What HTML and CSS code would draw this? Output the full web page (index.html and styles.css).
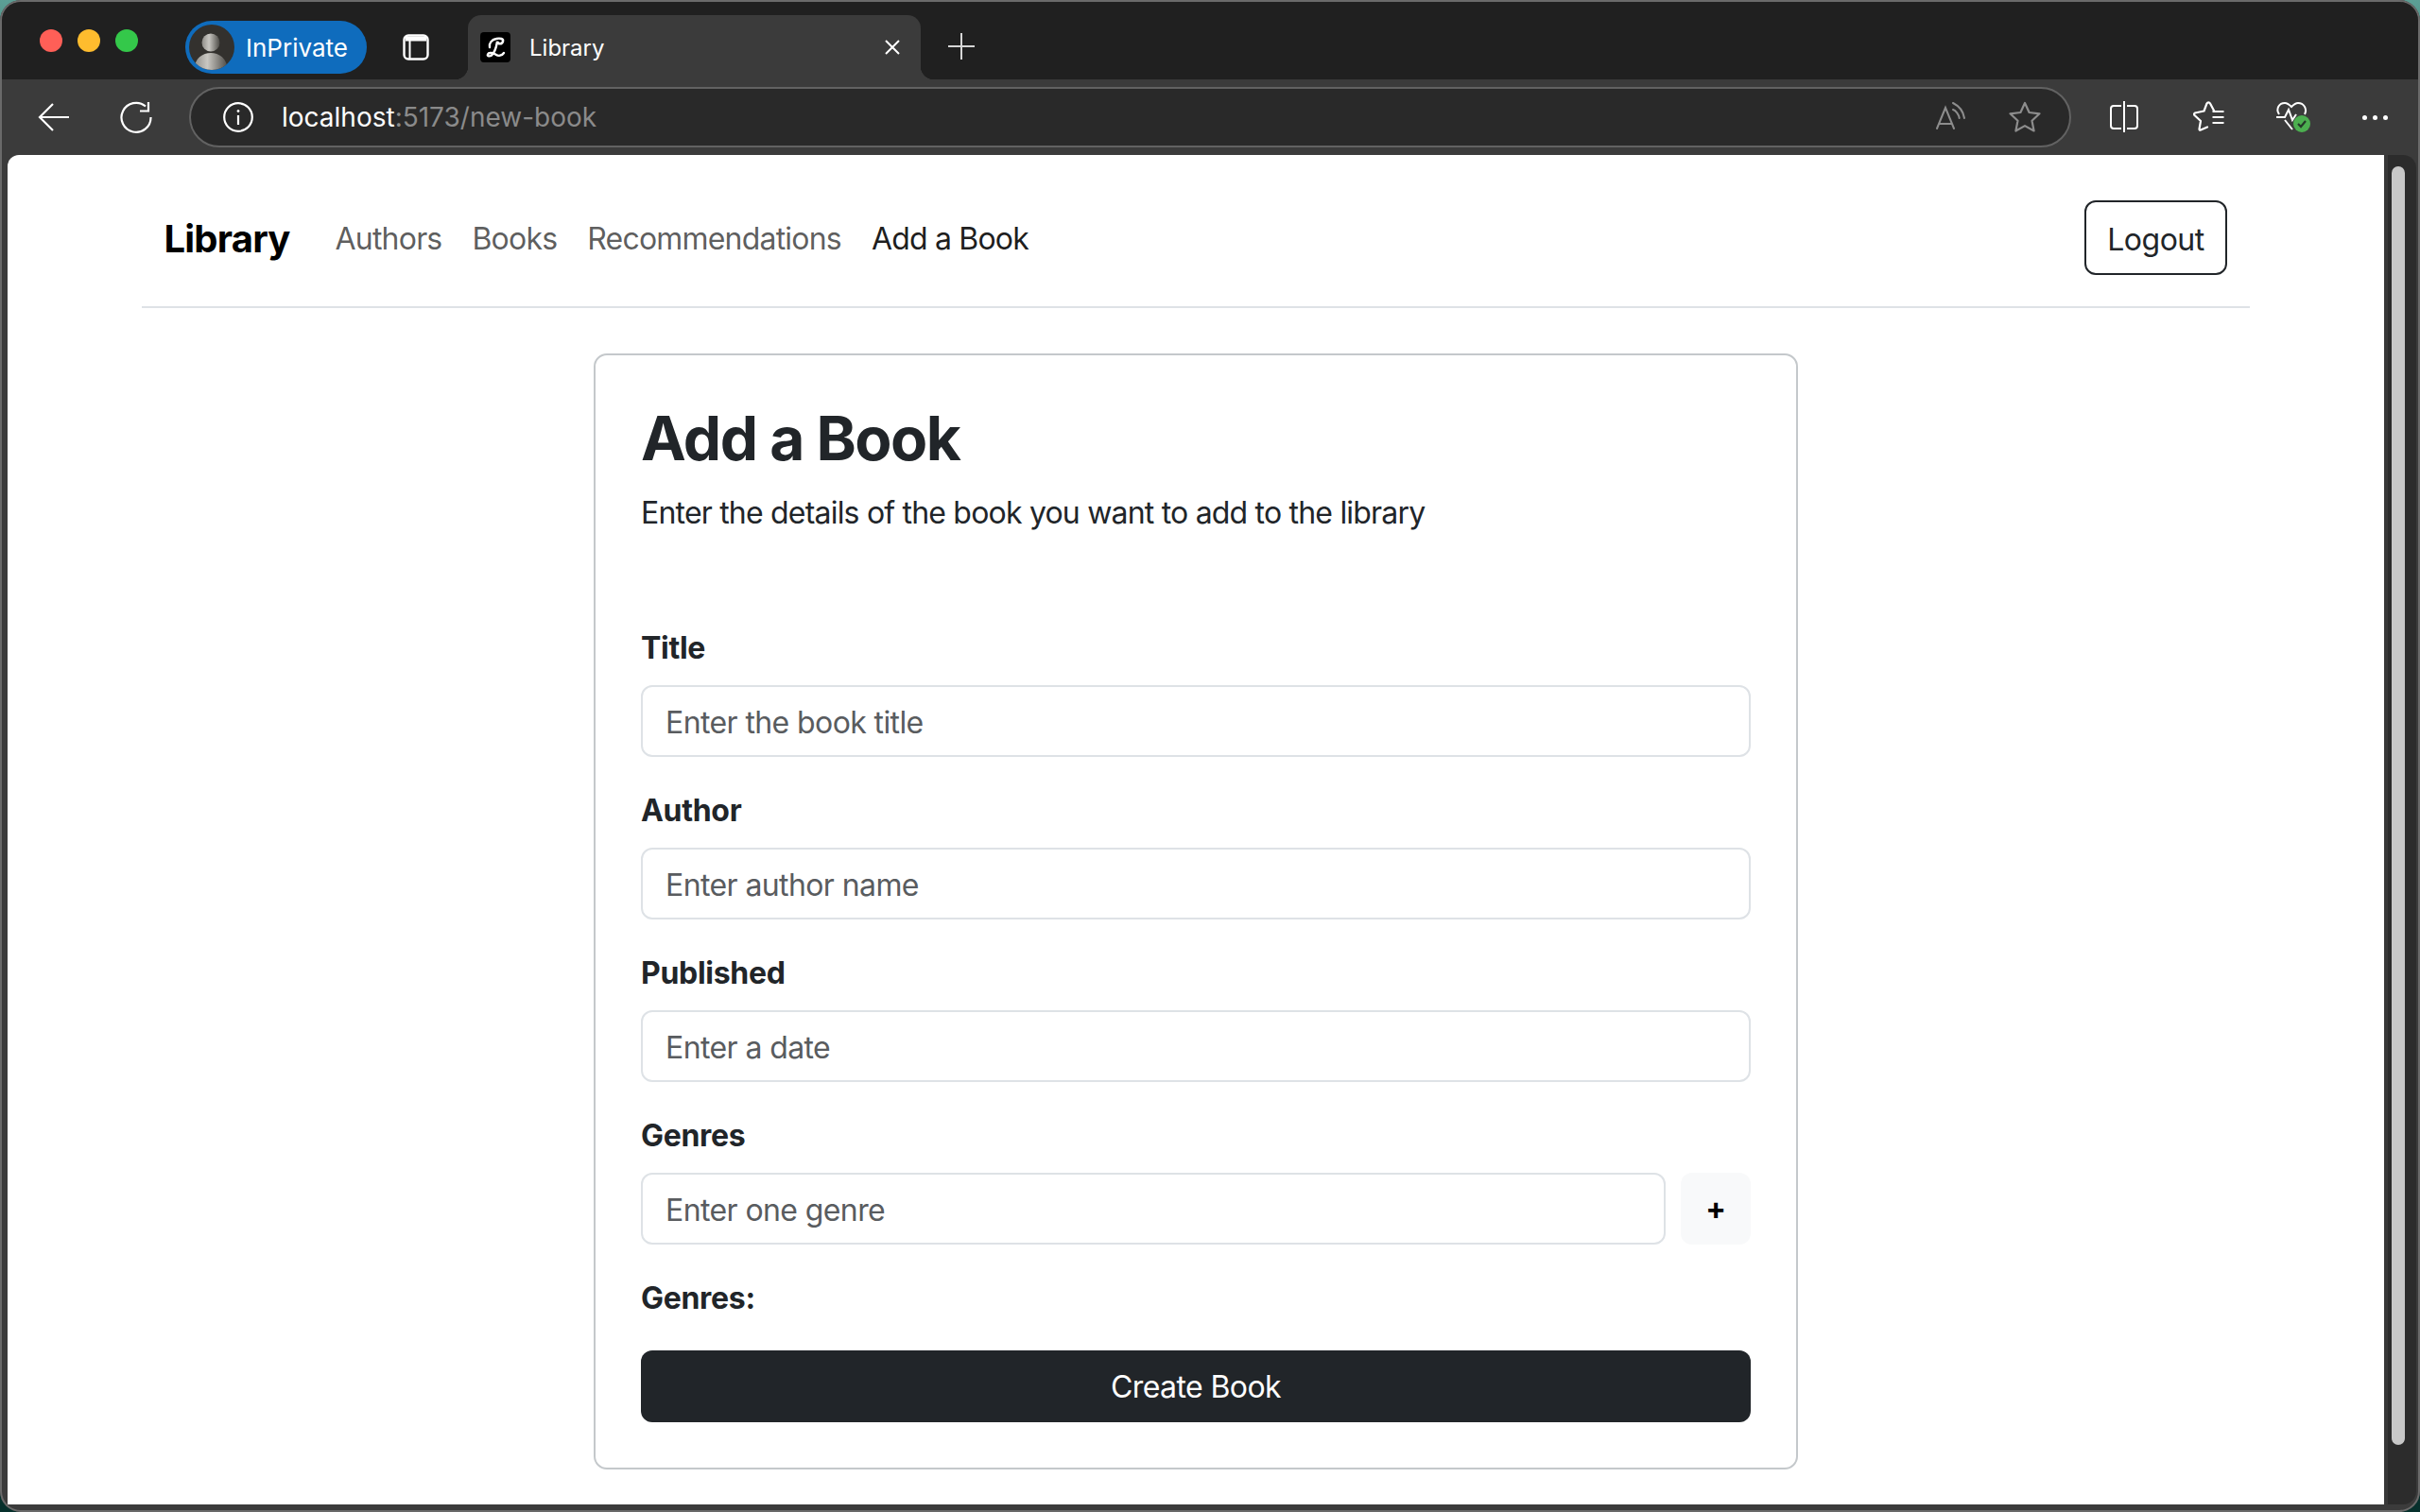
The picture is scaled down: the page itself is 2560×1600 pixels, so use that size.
FILE: index.html
```html
<!DOCTYPE html>
<html lang="en">
<head>
    <meta charset="UTF-8">
    <meta name="viewport" content="width=device-width, initial-scale=1.0">
    <title>Library</title>
    <link rel="stylesheet" href="styles.css">
</head>
<body>
<div class="window">

    <!-- tabs -->
    <div class="tabstrip">
        <div class="lights">
            <span class="light red"></span>
            <span class="light yellow"></span>
            <span class="light green"></span>
        </div>
        <div class="profile">
            <span class="avatar">
                <svg width="48" height="48" viewBox="0 0 48 48">
                    <defs>
                        <linearGradient id="bust" x1="0" x2="1" y1="0" y2="0">
                            <stop offset="0" stop-color="#8e8c87"/>
                            <stop offset="0.4" stop-color="#c9c7c2"/>
                            <stop offset="1" stop-color="#4c4a46"/>
                        </linearGradient>
                        <clipPath id="round"><circle cx="24" cy="24" r="24"/></clipPath>
                    </defs>
                    <circle cx="24" cy="24" r="24" fill="#33312e"/>
                    <circle cx="23" cy="19" r="9.500" fill="url(#bust)"/>
                    <path d="M5 50c0-14 9-20 18-20s18 6 18 20z" fill="url(#bust)" clip-path="url(#round)"/>
                </svg>
            </span>
            <span class="profile-name">InPrivate</span>
        </div>
        <svg class="tab-actions" width="28" height="28" viewBox="0 0 28 28" fill="none" stroke="#fff" stroke-width="2.4">
            <rect x="1.5" y="1.5" width="25" height="25" rx="4.500"/>
            <path d="M3 2.500h22v5H3z" fill="#fff" stroke="none"/>
            <path d="M7.500 7v19" stroke-width="2"/>
        </svg>
        <div class="tab">
            <svg class="favicon" width="32" height="32" viewBox="0 0 32 32" fill="none" stroke="#fff" stroke-width="2.400" stroke-linecap="round">
                <path d="M10 16C9 12 12 8 17 7c4-1 8 0 7 3-1 3-5 3-6 0-1 6-3 12-6 14.500-2 1.500-5 1-4-1 1-2.500 6-1.500 9 .5 2 1.500 6 1 8-2"/>
            </svg>
            <span class="tab-title">Library</span>
            <svg class="tab-close" width="16" height="16" viewBox="0 0 16 16" stroke="#fff" stroke-width="2">
                <path d="M1 1l14 14M15 1L1 15"/>
            </svg>
        </div>
        <svg class="new-tab" width="28" height="28" viewBox="0 0 28 28" stroke="#d6d6d6" stroke-width="2">
            <path d="M14 0v28M0 14h28"/>
        </svg>
    </div>

    <!-- toolbar -->
    <div class="toolbar">
        <svg class="tool-back" width="33" height="30" viewBox="0 0 33 30" fill="none" stroke="#fff" stroke-width="2.2">
            <path d="M33 15H2M16 1L2 15l14 14"/>
        </svg>
        <svg class="tool-reload" width="34" height="34" viewBox="0 0 34 34" fill="none" stroke="#fff" stroke-width="2.2">
            <path d="M27 5.500A15.500 15.500 0 1 0 32.500 17"/>
            <path d="M30 1v9.500h-9"/>
        </svg>
        <div class="address">
            <svg width="32" height="32" viewBox="0 0 32 32" fill="none" stroke="#fff" stroke-width="2.2">
                <circle cx="16" cy="16" r="14.8"/>
                <path d="M16 14v10"/>
                <circle cx="16" cy="9.500" r="1" fill="#fff" stroke-width="1"/>
            </svg>
            <span class="url"><span class="url-host">localhost</span>:5173/new-book</span>
            <svg class="addr-read" width="32" height="32" viewBox="0 0 32 32" fill="none" stroke="#8d8d8d" stroke-width="2" stroke-linecap="round">
                <path d="M1 28L10 6l9 22M3.500 23h13"/>
                <path d="M18 1c6 3 11 9 12 16M18 8c3 1 6 5 6.700 9"/>
            </svg>
            <svg class="addr-star" width="34" height="34" viewBox="0 0 34 34" fill="none" stroke="#8d8d8d" stroke-width="2.2" stroke-linejoin="round">
                <path d="M17 2l4.600 10 10.900 1.300-8 7.400 2.100 10.800L17 26.100 7.400 31.500l2.100-10.800-8-7.400L12.400 12z"/>
            </svg>
        </div>
        <svg class="tool-split" width="32" height="34" viewBox="0 0 32 34" fill="none" stroke="#fff" stroke-width="2">
            <path d="M13 5H5a3 3 0 0 0-3 3v18a3 3 0 0 0 3 3h8M19 5h8a3 3 0 0 1 3 3v18a3 3 0 0 1-3 3h-8"/>
            <path d="M16 0v33"/>
        </svg>
        <svg class="tool-favs" width="34" height="34" viewBox="0 0 34 34" fill="none" stroke="#fff" stroke-width="2.2" stroke-linejoin="round" stroke-linecap="round">
            <path d="M22 10L18 2.500a2 2 0 0 0-3.500 0L11.500 10.500 2 12.500a1.500 1.500 0 0 0-.5 2.500L8 21 6.500 29.500c0 1 .5 1.500 1.500 1L15 27.500"/>
            <path d="M20.500 11h12M20.500 17h12M20.500 23h12" stroke-width="2" stroke-linecap="butt"/>
        </svg>
        <svg class="tool-health" width="40" height="34" viewBox="0 0 40 34" fill="none" stroke="#fff" stroke-width="2">
            <path d="M5 14C1 8 5 2 11 2c3 0 5 2 7 4 2-2 4-4 7-4 6 0 10 6 7 12"/>
            <path d="M2 17h9l4-8 4 11 4-6"/>
            <path d="M11 20l8 10"/>
            <circle cx="29" cy="24" r="9" fill="#4caf50" stroke="none"/>
            <path d="M25 24l3 3 5-6" stroke="#25382a" stroke-width="2.200"/>
        </svg>
        <span class="tool-more"><i></i><i></i><i></i></span>
    </div>

    <div class="viewport">
        <div class="page">
            <nav class="navbar">
                <a class="brand">Library</a>
                <ul class="nav-links">
                    <li><a class="nav-link">Authors</a></li>
                    <li><a class="nav-link">Books</a></li>
                    <li><a class="nav-link">Recommendations</a></li>
                    <li><a class="nav-link active">Add a Book</a></li>
                </ul>
                <button class="btn-logout">Logout</button>
            </nav>

            <div class="card">
                <h2>Add a Book</h2>
                <p class="lead">Enter the details of the book you want to add to the library</p>

                <form>
                    <div class="field">
                        <label for="title">Title</label>
                        <input id="title" type="text" placeholder="Enter the book title">
                    </div>
                    <div class="field">
                        <label for="author">Author</label>
                        <input id="author" type="text" placeholder="Enter author name">
                    </div>
                    <div class="field">
                        <label for="published">Published</label>
                        <input id="published" type="text" placeholder="Enter a date">
                    </div>
                    <div class="field">
                        <label for="genre">Genres</label>
                        <div class="genre-row">
                            <input id="genre" type="text" placeholder="Enter one genre">
                            <button type="button" class="btn-add">+</button>
                        </div>
                    </div>
                    <div class="field">
                        <label class="genres-label">Genres:</label>
                    </div>
                    <button type="submit" class="btn-create">Create Book</button>
                </form>
            </div>
        </div>
        <div class="scrollbar"><div class="thumb"></div></div>
    </div>
</div>
</body>
</html>
```

FILE: styles.css
```css
* {
    box-sizing: border-box;
}
html, body {
    margin: 0;
    height: 100%;
    overflow: hidden;
}
body {
    background: linear-gradient(#5c9f95 0, #4d8f88 40px, #06302c 1500px);
    font-family: Inter, "Liberation Sans", sans-serif;
    color: #212529;
}

/* Окно браузера */
.window {
    display: flex;
    flex-direction: column;
    height: 1600px;
    background-color: #3b3b3b;
    border-radius: 22px;
    box-shadow: inset 0 0 0 2px #6a6a6a;
    overflow: hidden;
}

/* Вкладки */
.tabstrip {
    display: flex;
    align-items: flex-start;
    flex: 0 0 82px;
    margin: 2px 2px 0;
    background-color: #202020;
    border-radius: 20px 20px 0 0;
}
.lights {
    display: flex;
    gap: 16px;
    margin: 29px 0 0 40px;
}
.light {
    width: 24px;
    height: 24px;
    border-radius: 50%;
}
.red { background-color: #ff5f57; }
.yellow { background-color: #febc2e; }
.green { background-color: #34c84a; }
.profile {
    display: flex;
    align-items: center;
    gap: 12px;
    width: 192px;
    height: 56px;
    margin: 20px 0 0 50px;
    padding-left: 4px;
    background-color: #0f6cbd;
    border-radius: 28px;
}
.avatar {
    display: flex;
    flex: none;
}
.profile-name {
    color: #fff;
    font-size: 26px;
}
.tab-actions {
    margin: 34px 0 0 38px;
}
.tab {
    position: relative;
    display: flex;
    align-items: center;
    width: 479px;
    height: 68px;
    margin: 14px 0 0 41px;
    padding: 0 22px 0 13px;
    background-color: #3b3b3b;
    border-radius: 14px 14px 0 0;
}
.tab::before, .tab::after {
    content: "";
    position: absolute;
    bottom: 0;
    width: 14px;
    height: 14px;
}
.tab::before {
    left: -14px;
    background: radial-gradient(circle at 0 0, #202020 14px, #3b3b3b 14.5px);
}
.tab::after {
    right: -14px;
    background: radial-gradient(circle at 100% 0, #202020 14px, #3b3b3b 14.5px);
}
.favicon {
    flex: none;
    background-color: #000;
    border-radius: 4px;
}
.tab-title {
    flex: 1;
    margin-left: 20px;
    color: #fff;
    font-size: 24px;
}
.new-tab {
    margin: 33px 0 0 29px;
}

/* Панель адреса */
.toolbar {
    display: flex;
    align-items: center;
    flex: 0 0 80px;
    padding: 0 0 0 40px;
}
.tool-back {
    margin-right: 54px;
}
.tool-reload {
    margin-right: 39px;
}
.address {
    display: flex;
    align-items: center;
    flex: 0 0 1991px;
    height: 64px;
    padding: 0 30px 0 34px;
    background-color: #292929;
    border: 2px solid #626262;
    border-radius: 32px;
}
.url {
    flex: 1;
    margin-left: 30px;
    color: #8b8b8b;
    font-size: 28px;
}
.url-host {
    color: #fff;
}
.addr-read {
    margin-right: 45px;
}
.tool-split {
    margin-left: 40px;
}
.tool-favs {
    margin-left: 57px;
}
.tool-health {
    margin-left: 52px;
}
.tool-more {
    display: flex;
    gap: 6px;
    margin-left: 53px;
}
.tool-more i {
    width: 5px;
    height: 5px;
    background-color: #fff;
    border-radius: 50%;
}

/* Страница */
.viewport {
    display: flex;
    flex: 1;
    min-height: 0;
    margin: 0 4px 8px 8px;
}
.page {
    flex: 1;
    min-width: 0;
    padding: 0 142px;
    background-color: #fff;
    border-radius: 12px 0 0 0;
    overflow: hidden;
}
.scrollbar {
    flex: 0 0 34px;
    padding: 12px 0 0 4px;
    background-color: #2c2c2c;
    border-left: 4px solid #383838;
    border-radius: 0 14px 14px 0;
}
.thumb {
    width: 14px;
    height: 1353px;
    background-color: #c8c8c8;
    border-radius: 7px;
}

/* Навигация */
.navbar {
    display: flex;
    align-items: center;
    padding: 48px 24px 33px 23.5px;
    border-bottom: 2px solid #dee2e6;
}
.brand {
    margin: 2px 32px 0 0;
    color: #000;
    font-size: 40px;
    font-weight: 700;
    letter-spacing: -0.8px;
}
.nav-links {
    display: flex;
    flex: 1;
    margin: 2px 0 0;
    padding: 0;
    list-style: none;
}
.nav-link {
    display: block;
    padding: 16px;
    color: rgba(0, 0, 0, 0.65);
    font-size: 32px;
    letter-spacing: -0.8px;
}
.nav-link.active {
    color: rgba(0, 0, 0, 0.9);
}
.btn-logout {
    width: 151px;
    height: 79px;
    padding-top: 4px;
    background-color: #fff;
    border: 2px solid #212529;
    border-radius: 12px;
    color: #212529;
    font-family: inherit;
    font-size: 32px;
    letter-spacing: -0.5px;
}

/* Карточка формы */
.card {
    width: 1274px;
    margin: 48px auto 0;
    padding: 50px 48px 48px;
    background-color: #fff;
    border: 2px solid #c4c8cb;
    border-radius: 14px;
}
h2 {
    margin: 0 0 16px;
    font-size: 64px;
    font-weight: 700;
    line-height: 1.2;
    letter-spacing: -1.5px;
}
.lead {
    margin: 0 0 94px;
    font-size: 32px;
    line-height: 48px;
    letter-spacing: -0.8px;
}
.field {
    margin-bottom: 32px;
}
label {
    display: block;
    margin-bottom: 15px;
    padding-top: 1px;
    font-size: 32px;
    font-weight: 700;
    line-height: 48px;
    letter-spacing: -0.3px;
}
.genres-label {
    margin-bottom: -1px;
}
input {
    display: block;
    width: 100%;
    height: 76px;
    padding: 14px 24px 10px;
    background-color: #fff;
    border: 2px solid #dee2e6;
    border-radius: 12px;
    color: #212529;
    font-family: inherit;
    font-size: 32px;
    letter-spacing: -0.6px;
}
input::placeholder {
    color: #595c5f;
    opacity: 1;
}
.genre-row {
    display: flex;
    gap: 16px;
}
.genre-row input {
    flex: 1;
    min-width: 0;
}
.btn-add {
    flex: 0 0 74px;
    background-color: #f8f9fa;
    border: none;
    border-radius: 12px;
    color: #000;
    font-family: inherit;
    font-size: 32px;
    font-weight: 700;
}
.btn-create {
    display: block;
    width: 100%;
    height: 76px;
    padding-top: 2px;
    background-color: #212529;
    border: none;
    border-radius: 12px;
    color: #fff;
    font-family: inherit;
    font-size: 32px;
    letter-spacing: -0.6px;
}
```
